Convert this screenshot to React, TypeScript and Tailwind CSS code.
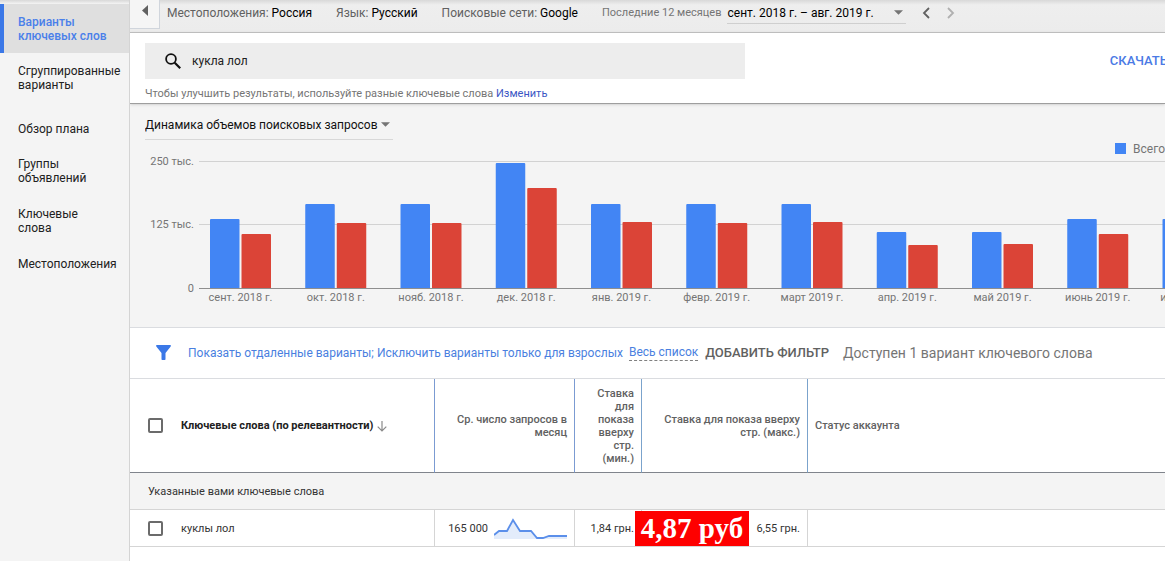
import { Fragment } from "react";

const navItems = [
  { label: ["Варианты", "ключевых слов"], active: true },
  { label: ["Сгруппированные", "варианты"] },
  { label: ["Обзор плана"], newGroup: true },
  { label: ["Группы", "объявлений"] },
  { label: ["Ключевые", "слова"] },
  { label: ["Местоположения"] },
];

// Bar heights in chart pixels, 127px is 250 000 queries
const months = [
  { name: "сент. 2018 г.", total: 69, mobile: 54 },
  { name: "окт. 2018 г.", total: 84, mobile: 65 },
  { name: "нояб. 2018 г.", total: 84, mobile: 65 },
  { name: "дек. 2018 г.", total: 125, mobile: 100 },
  { name: "янв. 2019 г.", total: 84, mobile: 66 },
  { name: "февр. 2019 г.", total: 84, mobile: 65 },
  { name: "март 2019 г.", total: 84, mobile: 66 },
  { name: "апр. 2019 г.", total: 56, mobile: 43 },
  { name: "май 2019 г.", total: 56, mobile: 44 },
  { name: "июнь 2019 г.", total: 69, mobile: 54 },
  { name: "июль 2019 г.", total: 69, mobile: 55 },
];

const Sidebar = () => (
  <nav className="w-[130px] shrink-0 border-r border-[#d4d4d4] bg-[#f4f4f4] text-xs leading-[14px]">
    <div className="h-1 bg-gradient-to-b from-[#d8d8d8] to-[#f4f4f4]" />
    {navItems.map((item) => (
      <a
        key={item.label.join(" ")}
        href="#"
        className={
          item.active
            ? "block border-l-4 border-[#3b78e7] bg-[#dfdfdf] pt-[11px] pb-[10px] pl-[14px] font-medium text-[#4a80ea]"
            : item.newGroup
              ? "mt-2 block pt-[11px] pb-[10px] pl-[18px] text-[#212121]"
              : "block py-[11px] pl-[18px] text-[#212121]"
        }
      >
        {item.label.map((line) => (
          <span key={line} className="block whitespace-nowrap">
            {line}
          </span>
        ))}
      </a>
    ))}
  </nav>
);

const Caret = () => (
  <svg viewBox="0 0 10 5" className="pointer-events-none absolute top-2 right-[3px] h-[5px] w-[9px]">
    <path d="M0 0h10L5 5z" fill="#757575" />
  </svg>
);

const SettingsBar = () => (
  <header className="flex h-8 shrink-0 items-start overflow-hidden bg-gradient-to-b from-[#d8d8d8] via-[#eeeeee] via-15% to-[#ececec] text-xs whitespace-nowrap text-[#616161]">
    <button aria-label="Свернуть меню" className="flex h-[29px] w-[30px] shrink-0 justify-center border-r border-b border-[#d0d5dc] bg-[#f5f5f5] pt-[5px]">
      <svg viewBox="0 0 6 11" className="h-[11px] w-[6px]">
        <path d="M6 0v11L0 5.500z" fill="#616161" />
      </svg>
    </button>
    <div className="flex h-[26px] items-center pl-[7px]">
      <span>
        Местоположения: <span className="text-black">Россия</span>
      </span>
      <span className="ml-6">
        Язык: <span className="text-black">Русский</span>
      </span>
      <span className="ml-6">
        Поисковые сети: <span className="text-black">Google</span>
      </span>
      <label htmlFor="period" className="ml-6 text-[11px] text-[#757575]">
        Последние 12 месяцев
      </label>
      <div className="relative ml-[6px]">
        <select id="period" className="block h-[22px] w-[179px] appearance-none border-b border-[#cfcfcf] bg-transparent text-xs text-black outline-none">
          <option>сент. 2018 г. – авг. 2019 г.</option>
        </select>
        <Caret />
      </div>
      <button aria-label="Предыдущий период" className="ml-4">
        <svg viewBox="0 0 8 12" className="h-3 w-2" fill="none" stroke="#616161" strokeWidth="1.8">
          <path d="M7 1L2 6l5 5" />
        </svg>
      </button>
      <button aria-label="Следующий период" className="ml-[17px]">
        <svg viewBox="0 0 8 12" className="h-3 w-2" fill="none" stroke="#b0b0b0" strokeWidth="1.8">
          <path d="M1 1l5 5-5 5" />
        </svg>
      </button>
    </div>
  </header>
);

const SearchPanel = () => (
  <section className="relative z-10 flex h-[72px] shrink-0 justify-between border-t border-b border-t-[#bdbdbd] border-b-[#9e9e9e] bg-white pt-[10px] pl-[15px] shadow-sm">
    <div className="w-[600px]">
      <div className="flex h-9 items-center bg-[#ededed] pl-5">
        <svg viewBox="0 0 16 16" className="h-4 w-4 shrink-0" fill="none" stroke="#111" strokeWidth="1.800">
          <circle cx="6" cy="6" r="4.900" />
          <path d="M9.700 9.700l5.500 5.500" strokeWidth="2.200" />
        </svg>
        <input aria-label="Ключевые слова" defaultValue="кукла лол" className="ml-[11px] flex-1 bg-transparent text-xs text-[#212121] outline-none" />
      </div>
      <p className="mt-[7px] text-[11px] leading-4 whitespace-nowrap text-[#757575]">
        Чтобы улучшить результаты, используйте разные ключевые слова{" "}
        <a href="#" className="text-[#3b56c4]">
          Изменить
        </a>
      </p>
    </div>
    <button className="-mr-[3px] h-9 pl-4 text-[13px] font-medium whitespace-nowrap text-[#4a7ae5]">СКАЧАТЬ</button>
  </section>
);

const Chart = () => (
  <svg width="1200" height="160" className="block max-w-none text-[11px]">
    <g fill="#757575" textAnchor="end">
      <text x="64" y="12">250 тыс.</text>
      <text x="64" y="75">125 тыс.</text>
      <text x="64" y="139">0</text>
    </g>
    <g shapeRendering="crispEdges">
      <rect x="69" y="8" width="1150" height="1" fill="#d2d2d2" />
      <rect x="69" y="71" width="1150" height="1" fill="#d2d2d2" />
    </g>
    {months.map((month, i) => {
      const x = 80 + i * 95.25;
      return (
        <Fragment key={month.name}>
          <path d={`M${x} 135v-${month.total - 1}q0-1 1-1h27.500q1 0 1 1v${month.total - 1}z`} fill="#4285f4" />
          <path d={`M${x + 31.5} 135v-${month.mobile - 1}q0-1 1-1h27.500q1 0 1 1v${month.mobile - 1}z`} fill="#db4437" />
          <text x={x + 30.5} y="148" textAnchor="middle" fill="#757575">
            {month.name}
          </text>
        </Fragment>
      );
    })}
    <rect x="69" y="135" width="1150" height="1" fill="#8e8e8e" shapeRendering="crispEdges" />
  </svg>
);

const ChartSection = () => (
  <section className="h-[223px] shrink-0 overflow-hidden bg-[#f4f4f4] pt-[10px]">
    <div className="relative ml-[15px] w-[248px]">
      <select aria-label="Показатель" className="block h-[26px] w-full appearance-none border-b border-[#d8d8d8] bg-transparent pb-1 text-xs text-[#111] outline-none">
        <option>Динамика объемов поисковых запросов</option>
      </select>
      <Caret />
    </div>
    <div className="flex h-[13px] items-center justify-end pt-1 text-xs text-[#757575]">
      <span className="mr-[7px] h-[11px] w-[11px] shrink-0 bg-[#4285f4]" />
      <span>Всего</span>
    </div>
    <Chart />
  </section>
);

const FilterBar = () => (
  <div className="flex h-[52px] shrink-0 items-center border-t border-b border-[#dadce0] pb-px pl-[26px] text-xs whitespace-nowrap text-[#4a7fe0]">
    <svg viewBox="0 0 15 15" className="mr-[17px] h-[15px] w-[15px]">
      <path d="M.5 0h14q.8.8 0 1.700L9.500 8v6.200q0 .8-.8.8H6.300q-.8 0-.8-.8V8L.5 1.700Q-.3.8.5 0z" fill="#3b78e7" />
    </svg>
    <a href="#">Показать отдаленные варианты;</a>
    <a href="#" className="ml-[3px]">Исключить варианты только для взрослых</a>
    <a href="#" className="ml-[6px] border-b border-dashed border-[#808080]">Весь список</a>
    <button className="ml-[7px] text-[13px] font-medium text-[#616161]">ДОБАВИТЬ ФИЛЬТР</button>
    <span className="ml-[14px] text-sm text-[#757575]">Доступен 1 вариант ключевого слова</span>
  </div>
);

const Sparkline = () => (
  <svg viewBox="0 0 73 22" className="h-[22px] w-[73px]">
    <path d="M0 18l5-4h8l6-11 7 11h11l6 7h6l6-2h18v4H0z" fill="#e3ecfb" />
    <path d="M0 18l5-4h8l6-11 7 11h11l6 7h6l6-2h18" fill="none" stroke="#5b8fea" strokeWidth="1.800" />
  </svg>
);

const checkboxClass = "block h-[15px] w-[15px] shrink-0 appearance-none rounded-[2px] border-2 border-[#6b6b6b] bg-white";

const KeywordTable = () => (
  <table className="w-full table-fixed border-separate border-spacing-0 text-[11px] leading-[13px] text-[#616161]">
    <colgroup>
      <col className="w-[305px]" />
      <col className="w-[140px]" />
      <col className="w-[67px]" />
      <col className="w-[166px]" />
      <col />
    </colgroup>
    <thead>
      <tr className="h-[94px] *:border-b *:border-b-[#80848c] *:font-medium">
        <th className="border-r border-r-[#7b9bd2] text-left">
          <div className="flex items-center pl-[18px] font-bold text-[#212121]">
            <input type="checkbox" aria-label="Выбрать все" className={checkboxClass} />
            <span className="ml-[18px]">Ключевые слова (по релевантности)</span>
            <svg viewBox="0 0 10 12" className="ml-1 h-3 w-[10px]" fill="none" stroke="#8a8a8a" strokeWidth="1.200">
              <path d="M5 1v10M.7 6.700L5 11l4.300-4.300" />
            </svg>
          </div>
        </th>
        <th className="border-r border-r-[#7b9bd2] pr-[7px] text-right">
          Ср. число запросов в
          <br />
          месяц
        </th>
        <th className="border-r border-r-[#7ba3cc] pr-[7px] pl-4 text-right">Ставка для показа вверху стр. (мин.)</th>
        <th className="border-r border-r-[#7ba3cc] pr-[7px] text-right">
          Ставка для показа вверху
          <br />
          стр. (макс.)
        </th>
        <th className="pl-[7px] text-left">Статус аккаунта</th>
      </tr>
    </thead>
    <tbody className="text-[#333]">
      <tr className="h-[37px]">
        <td colSpan={5} className="border-b border-[#d5d5d5] bg-[#f4f4f4] pl-[18px]">
          Указанные вами ключевые слова
        </td>
      </tr>
      <tr className="h-[37px] *:border-b *:border-[#d5d5d5]">
        <td className="border-r">
          <div className="flex items-center pl-[18px]">
            <input id="keyword" type="checkbox" className={checkboxClass} />
            <label htmlFor="keyword" className="ml-[18px]">
              куклы лол
            </label>
          </div>
        </td>
        <td className="border-r pr-[7px]">
          <div className="flex items-center justify-end gap-[6px]">
            165 000
            <Sparkline />
          </div>
        </td>
        <td className="border-r pr-[7px] text-right whitespace-nowrap">1,84 грн.</td>
        <td className="relative border-r pr-[7px] text-right">
          <span className="absolute top-px bottom-0 left-[-7px] flex w-[114px] items-center justify-center bg-[#fe0000] font-['Liberation_Serif',serif] text-[29px] font-bold whitespace-nowrap text-white">
            4,87 руб
          </span>
          6,55 грн.
        </td>
        <td />
      </tr>
    </tbody>
  </table>
);

export default function App() {
  return (
    <div className="flex min-h-screen overflow-hidden bg-white font-[Roboto,sans-serif]">
      <Sidebar />
      <main className="flex min-w-0 flex-1 flex-col overflow-hidden">
        <SettingsBar />
        <SearchPanel />
        <ChartSection />
        <FilterBar />
        <KeywordTable />
      </main>
    </div>
  );
}
